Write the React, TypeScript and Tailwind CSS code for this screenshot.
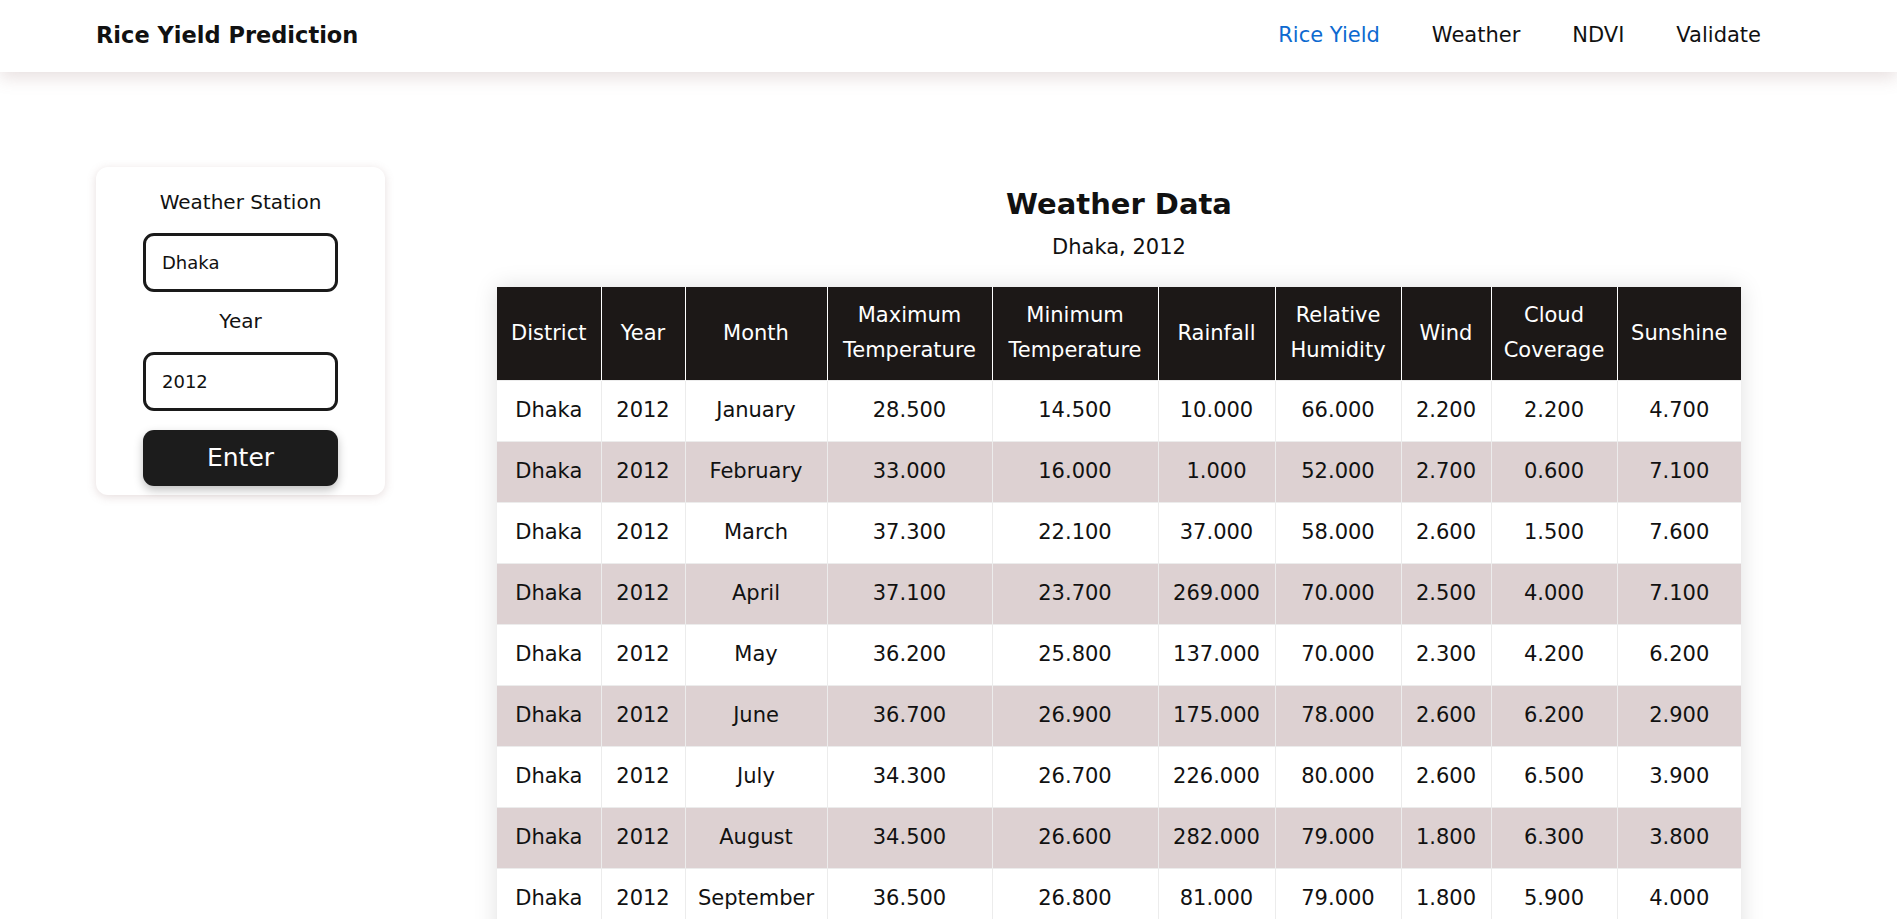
import React from "react";

const columns = [
  { label: ["District"], w: "w-[104px]" },
  { label: ["Year"], w: "w-[84px]" },
  { label: ["Month"], w: "w-[142px]" },
  { label: ["Maximum", "Temperature"], w: "w-[165px]" },
  { label: ["Minimum", "Temperature"], w: "w-[166px]" },
  { label: ["Rainfall"], w: "w-[117px]" },
  { label: ["Relative", "Humidity"], w: "w-[126px]" },
  { label: ["Wind"], w: "w-[90px]" },
  { label: ["Cloud", "Coverage"], w: "w-[126px]" },
  { label: ["Sunshine"], w: "w-[124px]" },
];

// month, max temp, min temp, rainfall, humidity, wind, cloud, sunshine
const rows: [string, number, number, number, number, number, number, number][] = [
  ["January", 28.5, 14.5, 10, 66, 2.2, 2.2, 4.7],
  ["February", 33, 16, 1, 52, 2.7, 0.6, 7.1],
  ["March", 37.3, 22.1, 37, 58, 2.6, 1.5, 7.6],
  ["April", 37.1, 23.7, 269, 70, 2.5, 4, 7.1],
  ["May", 36.2, 25.8, 137, 70, 2.3, 4.2, 6.2],
  ["June", 36.7, 26.9, 175, 78, 2.6, 6.2, 2.9],
  ["July", 34.3, 26.7, 226, 80, 2.6, 6.5, 3.9],
  ["August", 34.5, 26.6, 282, 79, 1.8, 6.3, 3.8],
  ["September", 36.5, 26.8, 81, 79, 1.8, 5.9, 4],
  ["October", 34.6, 24.1, 105, 74, 1.9, 3.9, 6.5],
  ["November", 31.4, 19.9, 12, 70, 1.7, 1.8, 7.4],
  ["December", 27.9, 14.8, 0, 69, 1.8, 1.2, 6.1],
];

const navLinks = ["Rice Yield", "Weather", "NDVI", "Validate"];

export default function App() {
  const [station, setStation] = React.useState("Dhaka");
  const [year, setYear] = React.useState("2012");

  return (
    <div className="min-h-screen bg-white text-[#111] font-['DejaVu_Sans',sans-serif]">
      {/* Navbar */}
      <header className="relative z-10 h-[72px] bg-white shadow-[0_6px_16px_rgba(140,100,100,0.2)]">
        <div className="flex h-full items-center justify-between px-[96px]">
          <h1 className="text-[22.5px] font-bold">Rice Yield Prediction</h1>
          <nav className="flex items-center gap-[52px] pr-[40px] text-[21px]">
            {navLinks.map((l, i) => (
              <a
                key={l}
                href="#"
                className={i === 0 ? "text-[#0d6ad0]" : "text-[#111]"}
              >
                {l}
              </a>
            ))}
          </nav>
        </div>
      </header>

      <div className="flex gap-[52px] px-[96px] pt-[95px]">
        {/* Sidebar form */}
        <aside className="w-[289px] shrink-0">
          <form
            onSubmit={(e) => e.preventDefault()}
            className="flex flex-col items-center rounded-[12px] bg-white px-[47px] pb-[9px] pt-[22px] shadow-[0_2px_10px_rgba(140,100,100,0.22)]"
          >
            <label className="text-[20px] leading-[26px]">Weather Station</label>
            <input
              className="mt-[18px] h-[59px] w-[195px] rounded-[11px] border-[3px] border-[#1a1a1a] px-[16px] text-[18px] outline-none"
              value={station}
              onChange={(e) => setStation(e.target.value)}
            />
            <label className="mt-[16px] text-[20px] leading-[26px]">Year</label>
            <input
              className="mt-[18px] h-[59px] w-[195px] rounded-[11px] border-[3px] border-[#1a1a1a] px-[16px] text-[18px] outline-none"
              value={year}
              onChange={(e) => setYear(e.target.value)}
            />
            <button
              type="submit"
              className="mt-[19px] h-[56px] w-[195px] rounded-[11px] bg-[#1c1c1c] text-[25px] text-white shadow-[0_4px_10px_rgba(0,0,0,0.25)]"
            >
              Enter
            </button>
          </form>
        </aside>

        {/* Main content */}
        <main className="flex flex-1 flex-col items-center">
          <h2 className="mt-[19px] text-[29px] font-bold leading-[36px]">Weather Data</h2>
          <p className="mt-[11px] text-[21px] leading-[28px]">
            {station}, {year}
          </p>

          <div className="mt-[26px] shadow-[0_0_22px_rgba(0,0,0,0.13)]">
            <table className="w-[1244px] table-fixed border-collapse text-center text-[21px]">
              <thead>
                <tr className="h-[93px] bg-[#1c1817] text-white">
                  {columns.map((c) => (
                    <th
                      key={c.label.join(" ")}
                      className={`${c.w} border-x border-white px-1 font-normal leading-[35px] first:border-l-0 last:border-r-0`}
                    >
                      {c.label.map((t) => (
                        <div key={t}>{t}</div>
                      ))}
                    </th>
                  ))}
                </tr>
              </thead>
              <tbody>
                {rows.map((r, i) => (
                  <tr
                    key={r[0]}
                    className={`h-[61px] ${i % 2 === 1 ? "bg-[#ddd1d2]" : "bg-white"}`}
                  >
                    <td className="border border-[#ececec] border-l-0">Dhaka</td>
                    <td className="border border-[#ececec]">2012</td>
                    <td className="border border-[#ececec]">{r[0]}</td>
                    {r.slice(1).map((v, j) => (
                      <td
                        key={j}
                        className="border border-[#ececec] last:border-r-0"
                      >
                        {(v as number).toFixed(3)}
                      </td>
                    ))}
                  </tr>
                ))}
              </tbody>
            </table>
          </div>
          <div className="h-[60px]" />
        </main>
      </div>
    </div>
  );
}
